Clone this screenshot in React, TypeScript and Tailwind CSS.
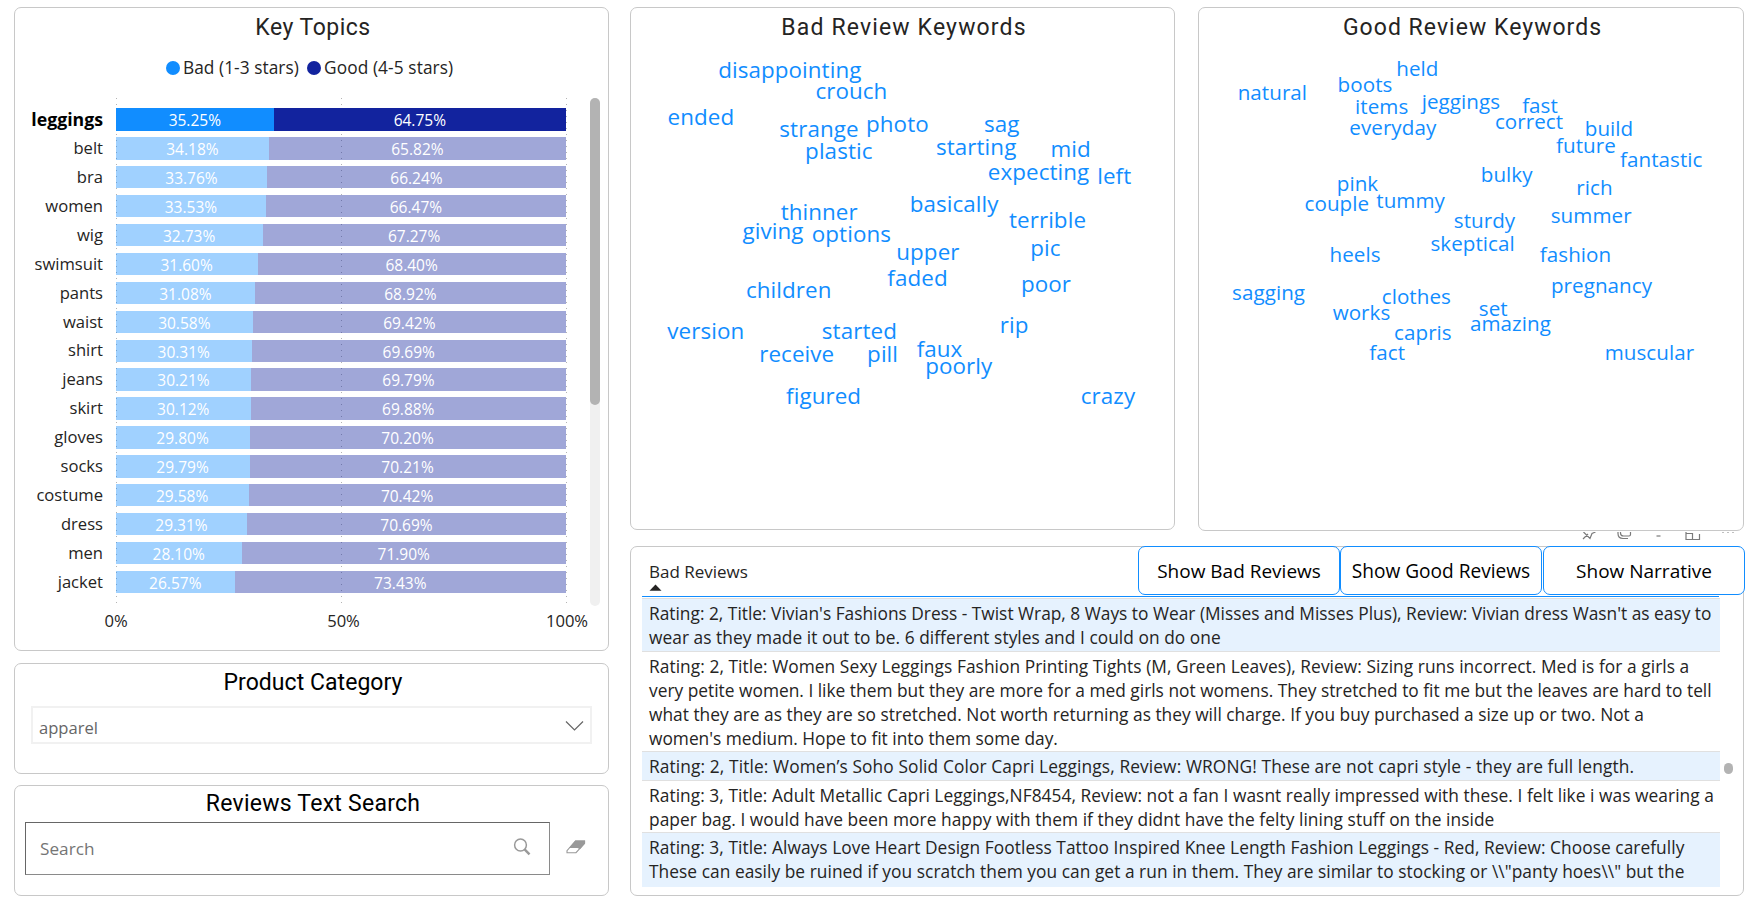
import React from "react";

type Word = [text: string, centerX: number, baseline: number];
type Line = [text: string, tracking: string];

const topics: [string, number][] = [
  ["leggings", 35.25],
  ["belt", 34.18],
  ["bra", 33.76],
  ["women", 33.53],
  ["wig", 32.73],
  ["swimsuit", 31.6],
  ["pants", 31.08],
  ["waist", 30.58],
  ["shirt", 30.31],
  ["jeans", 30.21],
  ["skirt", 30.12],
  ["gloves", 29.8],
  ["socks", 29.79],
  ["costume", 29.58],
  ["dress", 29.31],
  ["men", 28.1],
  ["jacket", 26.57],
];

const badWords: Word[] = [
  ["disappointing", 789.8, 78.3],
  ["crouch", 851.4, 98.7],
  ["ended", 700.9, 125.4],
  ["strange", 819, 137.4],
  ["photo", 897.4, 132.4],
  ["sag", 1001.7, 132.4],
  ["plastic", 838.8, 159.4],
  ["starting", 976.2, 155.4],
  ["mid", 1070.6, 157.4],
  ["expecting", 1038.6, 180],
  ["left", 1114.2, 184.3],
  ["basically", 954.2, 212.4],
  ["thinner", 819.2, 220.4],
  ["terrible", 1047.5, 228],
  ["giving", 773, 239],
  ["options", 851.4, 242.4],
  ["upper", 927.9, 260.4],
  ["pic", 1045.5, 256.4],
  ["faded", 917.5, 286.4],
  ["poor", 1046, 292],
  ["children", 788.7, 298.4],
  ["version", 705.8, 339],
  ["started", 859.4, 339],
  ["rip", 1014.2, 333],
  ["receive", 796.7, 362.4],
  ["pill", 882.6, 362],
  ["faux", 939.5, 357],
  ["poorly", 958.8, 374],
  ["figured", 823.6, 404.4],
  ["crazy", 1108, 404],
];

const goodWords: Word[] = [
  ["held", 1417.4, 76],
  ["natural", 1272.4, 100.4],
  ["boots", 1365, 91.7],
  ["items", 1381.7, 114],
  ["jeggings", 1460.9, 108.7],
  ["fast", 1540, 113],
  ["everyday", 1392.8, 134.7],
  ["correct", 1529, 129.4],
  ["build", 1609, 136.4],
  ["future", 1585.9, 152.7],
  ["fantastic", 1661.3, 167.4],
  ["bulky", 1506.7, 182.4],
  ["pink", 1357.5, 191],
  ["rich", 1594.5, 195.4],
  ["couple", 1336.8, 210.7],
  ["tummy", 1410.6, 207.7],
  ["sturdy", 1484.5, 228.4],
  ["summer", 1591.2, 222.7],
  ["skeptical", 1472.6, 251.4],
  ["heels", 1355, 262.4],
  ["fashion", 1575.5, 261.7],
  ["pregnancy", 1601.5, 292.7],
  ["sagging", 1268.6, 300],
  ["clothes", 1416.3, 304.4],
  ["works", 1361.5, 320.4],
  ["set", 1493.3, 316.4],
  ["amazing", 1510.5, 331.4],
  ["capris", 1422.9, 340],
  ["fact", 1387.2, 360],
  ["muscular", 1649.4, 360],
];

const reviews: { lines: Line[]; box: string }[] = [
  {
    lines: [
      [
        "Rating: 2, Title: Vivian's Fashions Dress - Twist Wrap, 8 Ways to Wear (Misses and Misses Plus), Review: Vivian dress Wasn't as easy to",
        "tracking-normal",
      ],
      ["wear as they made it out to be. 6 different styles and I could on do one", "tracking-[0.045px]"],
    ],
    box: "h-[53px] pt-[1.5px] bg-[#e6f2fe] border-b",
  },
  {
    lines: [
      [
        "Rating: 2, Title: Women Sexy Leggings Fashion Printing Tights (M, Green Leaves), Review: Sizing runs incorrect. Med is for a girls a",
        "tracking-[0.058px]",
      ],
      [
        "very petite women. I like them but they are more for a med girls not womens. They stretched to fit me but the leaves are hard to tell",
        "tracking-[0.007px]",
      ],
      [
        "what they are as they are so stretched. Not worth returning as they will charge. If you buy purchased a size up or two. Not a",
        "tracking-[0.007px]",
      ],
      ["women's medium. Hope to fit into them some day.", "tracking-normal"],
    ],
    box: "h-[100px] pt-[1.5px] border-b",
  },
  {
    lines: [
      [
        "Rating: 2, Title: Women’s Soho Solid Color Capri Leggings, Review: WRONG! These are not capri style - they are full length.",
        "tracking-[0.109px]",
      ],
    ],
    box: "h-[29px] pt-[1.5px] bg-[#e6f2fe] border-b",
  },
  {
    lines: [
      [
        "Rating: 3, Title: Adult Metallic Capri Leggings,NF8454, Review: not a fan I wasnt really impressed with these. I felt like i was wearing a",
        "tracking-[0.048px]",
      ],
      [
        "paper bag. I would have been more happy with them if they didnt have the felty lining stuff on the inside",
        "tracking-[0.052px]",
      ],
    ],
    box: "h-[52px] pt-[1.5px] border-b",
  },
  {
    lines: [
      [
        "Rating: 3, Title: Always Love Heart Design Footless Tattoo Inspired Knee Length Fashion Leggings - Red, Review: Choose carefully",
        "tracking-[0.05px]",
      ],
      [
        'These can easily be ruined if you scratch them you can get a run in them. They are similar to stocking or \\\\"panty hoes\\\\" but the',
        "tracking-[0.043px]",
      ],
    ],
    box: "h-[54px] pt-[1.5px] bg-[#e6f2fe]",
  },
];

function Panel({ className, children }: { className: string; children?: React.ReactNode }) {
  return (
    <section className={"relative rounded-[7px] border border-[#c8c8c8] bg-white " + className}>{children}</section>
  );
}

function Title({ className, children }: { className: string; children: React.ReactNode }) {
  return (
    <h2
      className={
        "text-center font-[Roboto,sans-serif] text-[23px] leading-[28px] font-normal whitespace-nowrap " + className
      }
    >
      {children}
    </h2>
  );
}

function WordCloud({ words, originX, className }: { words: Word[]; originX: number; className: string }) {
  return (
    <div className="absolute inset-0">
      {words.map(([text, x, y]) => (
        <span
          key={text}
          className={"absolute -translate-x-1/2 leading-[22px] whitespace-nowrap text-[#118dff] " + className}
          style={{ left: x - originX, top: Math.round(y) - 27 }}
        >
          {text}
        </span>
      ))}
    </div>
  );
}

function KeyTopics() {
  return (
    <Panel className="h-[644px]">
      <Title className="pt-[6px] pl-[3px] tracking-[0.5px] text-[#252423]">Key Topics</Title>
      <div className="mt-[14px] flex h-6 items-center pl-[151px] text-[17.3px] tracking-[0.05px] text-[#252423]">
        <span className="size-[14px] rounded-full bg-[#118dff]" />
        <span className="ml-[3px] w-[124px]">Bad (1-3 stars)</span>
        <span className="size-[14px] rounded-full bg-[#12239e]" />
        <span className="ml-[3px] tracking-[0.1px]">Good (4-5 stars)</span>
      </div>

      <div className="mt-[18px] flex h-[509px]">
        <ul className="w-[88px] pt-[7px] text-right text-[16.6px] text-[#252423]">
          {topics.map(([name], i) => (
            <li
              key={name}
              className={
                "flex h-[28.92px] items-center justify-end leading-none " +
                (i === 0 ? "text-[17.7px] font-bold text-black" : "")
              }
            >
              {name}
            </li>
          ))}
        </ul>
        <div className="relative ml-[12.5px] w-[451px]">
          <div className="absolute inset-0 flex justify-between">
            {[0, 1, 2].map((n) => (
              <span
                key={n}
                className="w-px bg-[repeating-linear-gradient(to_bottom,#b4b4b4_0px,#b4b4b4_1px,transparent_1px,transparent_6px)]"
              />
            ))}
          </div>
          <div className="relative flex flex-col pt-[7px]">
            {topics.map(([name, bad], i) => (
              <div key={name} className="flex h-[28.92px] w-[450px] items-center">
                <div className="flex h-[22.4px] w-full text-[15.5px] leading-[23px] text-white">
                  <div
                    className={"pt-px text-center " + (i === 0 ? "bg-[#118dff]" : "bg-[#118dff]/40")}
                    style={{ width: bad + "%" }}
                  >
                    {bad.toFixed(2)}%
                  </div>
                  <div className={"flex-1 pt-px text-center " + (i === 0 ? "bg-[#12239e]" : "bg-[#12239e]/40")}>
                    {(100 - bad).toFixed(2)}%
                  </div>
                </div>
              </div>
            ))}
          </div>
        </div>
        <div className="ml-[23px] h-[508px] w-[10px] rounded-full bg-[#f0f0f0]">
          <div className="h-[307px] w-full rounded-full bg-[#b3b3b3]" />
        </div>
      </div>

      <div className="mt-[2px] flex w-[570px] justify-between pl-[79px] text-[16.6px] leading-[24px] text-[#252423]">
        <span className="w-[44px] text-center">0%</span>
        <span className="w-[44px] text-center">50%</span>
        <span className="flex w-[36px] justify-center">100%</span>
      </div>
    </Panel>
  );
}

function ProductCategory() {
  return (
    <Panel className="mt-[12px] h-[111px]">
      <Title className="pt-[5px] pl-[3px] tracking-[0.05px] text-black">Product Category</Title>
      <div className="mt-[9px] ml-[16px] flex h-[38px] w-[561px] items-center justify-between border-2 border-[#f1f1f1] pt-[2px] pr-[6px] pl-[6px] text-[#666]">
        <span className="pt-[3px] text-[16.6px] leading-5">apparel</span>
        <svg width="19" height="12" viewBox="0 0 19 12" fill="none" stroke="#666" strokeWidth="1.2">
          <path d="M1 1.500 9.500 10 18 1.500" />
        </svg>
      </div>
    </Panel>
  );
}

function TextSearch() {
  return (
    <Panel className="mt-[11px] h-[111px]">
      <Title className="pt-[4px] pl-[3px] tracking-[0.25px] text-black">Reviews Text Search</Title>
      <div className="mt-[4px] flex items-center pl-[10px]">
        <div className="flex h-[53px] w-[525px] items-center justify-between border border-t-[#666] border-r-[#8a8a8a] border-b-[#8a8a8a] border-l-[#666] pr-[18px] pl-[14px]">
          <span className="text-[17.2px] text-[#757575]">Search</span>
          <svg className="mb-[3px]" width="18" height="18" viewBox="0 0 18 18" fill="none" stroke="#999">
            <circle cx="7.5" cy="7" r="5.9" strokeWidth="1.5" />
            <path d="m11.600 11.400 4.900 5" strokeWidth="2.4" />
          </svg>
        </div>
        <svg className="mb-[4px] ml-[16px]" width="20" height="14" viewBox="0 0 20 14">
          <path d="M9.500 1H18.600V3.300L10 12.700H1V10.600Z" fill="#fff" stroke="#999" strokeWidth="1.1" />
          <path d="M9.300.5H19V3.500L14 9.200 11.500 8H3Z" fill="#999" />
        </svg>
      </div>
    </Panel>
  );
}

function VisualToolbar() {
  return (
    <svg
      className="mt-px ml-[951px] block"
      width="160"
      height="14"
      viewBox="0 0 160 14"
      fill="none"
      stroke="#7a7a7a"
      strokeWidth="1.2"
    >
      <path d="M2 7 7 2M2.500 0 9 6.500 11 1.500 14.500 0" />
      <path d="M39.500 0v1q0 3 3 3h6M37 0v1.500q0 5 5 5h5M49.500 0v2.500q0 1.500-1.500 1.500" />
      <path d="M75.500 4h4" />
      <path d="M105 0v7.500h13.500V2M105 1.500h6.500v6" />
      <path d="M141 .5h2M146 .5h2M151 .5h2" stroke="#c0c0c0" />
    </svg>
  );
}

function ReviewTable() {
  const button =
    "flex h-[49px] items-center justify-center rounded-[7px] border border-[#118dff] bg-white pt-[2px] text-black whitespace-nowrap";
  return (
    <Panel className="h-[350px] w-[1114px]">
      <div className="mr-[24px] ml-[11px] flex h-[50px] justify-between border-b border-[#118dff]">
        <div className="pt-[16px] pl-[7px] text-[#252423]">
          <div className="text-[17px] leading-[18px]">Bad Reviews</div>
          <svg className="mt-[3px]" width="13" height="7" viewBox="0 0 13 7">
            <path d="M.5 6.800 6.500.500l6 6.300Z" fill="#252423" />
          </svg>
        </div>
        <div className="-mt-px -mr-[26px] flex gap-px text-[19px]">
          <button className={button + " w-[202px]"}>Show Bad Reviews</button>
          <button className={button + " -ml-px w-[202px] text-[19.1px]"}>Show Good Reviews</button>
          <button className={button + " w-[202px]"}>Show Narrative</button>
        </div>
      </div>
      <div className="mt-px flex">
        <div className="ml-[11px] w-[1078px] border-t border-[#e0e0e0] text-[17.33px] leading-[24.2px] text-[#252423]">
          {reviews.map((review) => (
            <div key={review.lines[0][0]} className={"border-[#e0e0e0] pl-[7px] " + review.box}>
              {review.lines.map(([text, tracking]) => (
                <p key={text} className={"whitespace-nowrap " + tracking}>
                  {text}
                </p>
              ))}
            </div>
          ))}
        </div>
        <span className="mt-[165px] ml-[4px] h-[11px] w-[9px] rounded-full bg-[#b3b3b3]" />
      </div>
    </Panel>
  );
}

export default function App() {
  return (
    <main className="flex h-[902px] w-[1754px] gap-[21px] overflow-hidden bg-white pt-[7px] pl-[14px] font-['Open_Sans','Noto_Sans',sans-serif]">
      <div className="flex w-[595px] flex-col">
        <KeyTopics />
        <ProductCategory />
        <TextSearch />
      </div>
      <div className="w-[1114px]">
        <div className="flex items-start gap-[23px]">
          <Panel className="h-[523px] w-[545px]">
            <Title className="pt-[6px] pl-[3px] tracking-[1.15px] text-[#252423]">Bad Review Keywords</Title>
            <WordCloud words={badWords} originX={631} className="text-[22.4px] tracking-[0.08px]" />
          </Panel>
          <Panel className="h-[524px] w-[546px]">
            <Title className="pt-[6px] pl-[3px] tracking-[1.03px] text-[#252423]">Good Review Keywords</Title>
            <WordCloud words={goodWords} originX={1199} className="text-[20.6px] tracking-[0.05px]" />
          </Panel>
        </div>
        <VisualToolbar />
        <ReviewTable />
      </div>
    </main>
  );
}
